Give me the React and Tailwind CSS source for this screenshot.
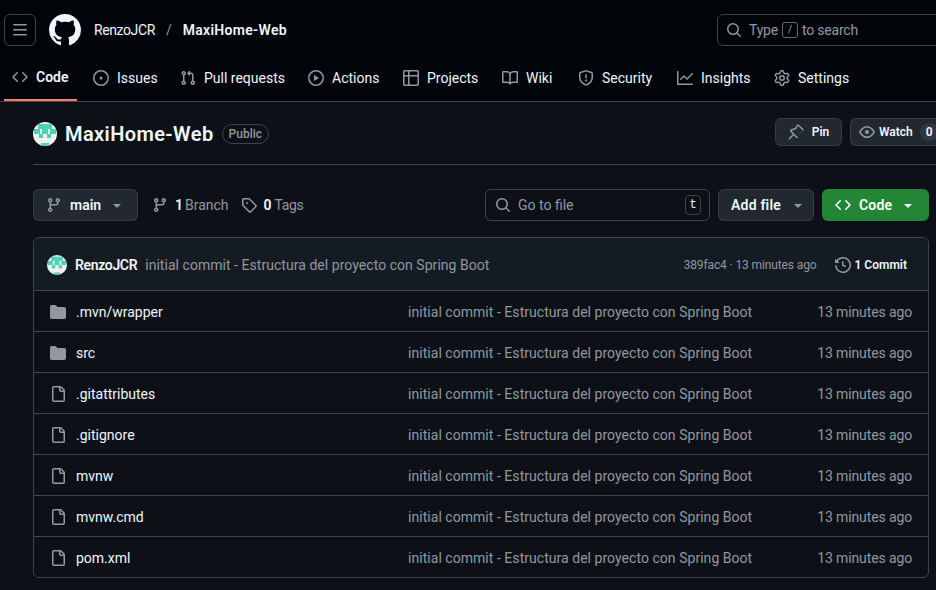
import React from 'react'

const P = {
  bars: 'M1 2.75A.75.75 0 0 1 1.75 2h12.5a.75.75 0 0 1 0 1.5H1.75A.75.75 0 0 1 1 2.75Zm0 5A.75.75 0 0 1 1.75 7h12.5a.75.75 0 0 1 0 1.5H1.75A.75.75 0 0 1 1 7.75ZM1.75 12h12.5a.75.75 0 0 1 0 1.5H1.75a.75.75 0 0 1 0-1.5Z',
  github: 'M8 0c4.42 0 8 3.58 8 8a8.013 8.013 0 0 1-5.45 7.59c-.4.08-.55-.17-.55-.38 0-.27.01-1.13.01-2.2 0-.75-.25-1.23-.54-1.48 1.78-.2 3.65-.88 3.65-3.95 0-.88-.31-1.59-.82-2.15.08-.2.36-1.02-.08-2.12 0 0-.67-.22-2.2.82-.64-.18-1.32-.27-2-.27-.68 0-1.36.09-2 .27-1.53-1.03-2.2-.82-2.2-.82-.44 1.1-.16 1.92-.08 2.12-.51.56-.82 1.28-.82 2.15 0 3.06 1.86 3.75 3.64 3.95-.23.2-.44.55-.51 1.07-.46.21-1.61.55-2.33-.66-.15-.24-.6-.83-1.23-.82-.67.01-.27.38.01.53.34.19.73.9.82 1.13.16.45.68 1.31 2.69.94 0 .67.01 1.3.01 1.49 0 .21-.15.45-.55.38A7.995 7.995 0 0 1 0 8c0-4.42 3.58-8 8-8Z',
  code: 'm11.28 3.22 4.25 4.25a.75.75 0 0 1 0 1.06l-4.25 4.25a.749.749 0 0 1-1.275-.326.749.749 0 0 1 .215-.734L13.94 8l-3.72-3.72a.749.749 0 0 1 .326-1.275.749.749 0 0 1 .734.215Zm-6.56 0a.751.751 0 0 1 1.042.018.751.751 0 0 1 .018 1.042L2.06 8l3.72 3.72a.749.749 0 0 1-.326 1.275.749.749 0 0 1-.734-.215L.47 8.53a.75.75 0 0 1 0-1.06Z',
  issue: 'M8 9.5a1.5 1.5 0 1 0 0-3 1.5 1.5 0 0 0 0 3ZM8 0a8 8 0 1 1 0 16A8 8 0 0 1 8 0ZM1.5 8a6.5 6.5 0 1 0 13 0 6.5 6.5 0 0 0-13 0Z',
  pr: 'M1.5 3.25a2.25 2.25 0 1 1 3 2.122v5.256a2.251 2.251 0 1 1-1.5 0V5.372A2.25 2.25 0 0 1 1.5 3.25Zm5.677-.177L9.573.677A.25.25 0 0 1 10 .854V2.5h1A2.5 2.5 0 0 1 13.5 5v5.628a2.251 2.251 0 1 1-1.5 0V5a1 1 0 0 0-1-1h-1v1.646a.25.25 0 0 1-.427.177L7.177 3.427a.25.25 0 0 1 0-.354ZM3.75 2.5a.75.75 0 1 0 0 1.5.75.75 0 0 0 0-1.5Zm0 9.5a.75.75 0 1 0 0 1.5.75.75 0 0 0 0-1.5Zm8.25.75a.75.75 0 1 0 1.5 0 .75.75 0 0 0-1.5 0Z',
  play: 'M8 0a8 8 0 1 1 0 16A8 8 0 0 1 8 0ZM1.5 8a6.5 6.5 0 1 0 13 0 6.5 6.5 0 0 0-13 0Zm4.879-2.773 4.264 2.559a.25.25 0 0 1 0 .428l-4.264 2.559A.25.25 0 0 1 6 10.559V5.442a.25.25 0 0 1 .379-.215Z',
  table: 'M0 1.75C0 .784.784 0 1.75 0h12.5C15.216 0 16 .784 16 1.75v12.5A1.75 1.75 0 0 1 14.25 16H1.75A1.75 1.75 0 0 1 0 14.25ZM6.5 6.5v8h7.75a.25.25 0 0 0 .25-.25V6.5Zm8-1.5V1.75a.25.25 0 0 0-.25-.25H6.5V5Zm-13 1.5v7.75c0 .138.112.25.25.25H5v-8ZM5 5V1.5H1.75a.25.25 0 0 0-.25.25V5Z',
  book: 'M0 1.75A.75.75 0 0 1 .75 1h4.253c1.227 0 2.317.59 3 1.501A3.743 3.743 0 0 1 11.006 1h4.245a.75.75 0 0 1 .75.75v10.5a.75.75 0 0 1-.75.75h-4.507a2.25 2.25 0 0 0-1.591.659l-.622.621a.75.75 0 0 1-1.06 0l-.622-.621A2.25 2.25 0 0 0 5.258 13H.75a.75.75 0 0 1-.75-.75Zm7.251 10.324.004-5.073-.002-2.253A2.25 2.25 0 0 0 5.003 2.5H1.5v9h3.757a3.75 3.75 0 0 1 1.994.574ZM8.755 4.75l-.004 7.322a3.752 3.752 0 0 1 1.992-.572H14.5v-9h-3.495a2.25 2.25 0 0 0-2.25 2.25Z',
  shield: 'M7.467.133a1.748 1.748 0 0 1 1.066 0l5.25 1.68A1.75 1.75 0 0 1 15 3.48V7c0 1.566-.32 3.182-1.303 4.682-.983 1.498-2.585 2.813-5.032 3.855a1.697 1.697 0 0 1-1.33 0c-2.447-1.042-4.049-2.357-5.032-3.855C1.32 10.182 1 8.566 1 7V3.48a1.75 1.75 0 0 1 1.217-1.667Zm.61 1.429a.25.25 0 0 0-.153 0l-5.25 1.68a.25.25 0 0 0-.174.238V7c0 1.358.275 2.666 1.057 3.86.784 1.194 2.121 2.34 4.366 3.297a.196.196 0 0 0 .154 0c2.245-.956 3.582-2.104 4.366-3.298C13.225 9.666 13.5 8.36 13.5 7V3.48a.251.251 0 0 0-.174-.237l-5.25-1.68ZM8.75 4.75v3a.75.75 0 0 1-1.5 0v-3a.75.75 0 0 1 1.5 0ZM9 10.5a1 1 0 1 1-2 0 1 1 0 0 1 2 0Z',
  graph: 'M1.5 1.75V13.5h13.75a.75.75 0 0 1 0 1.5H.75a.75.75 0 0 1-.75-.75V1.75a.75.75 0 0 1 1.5 0Zm14.28 2.53-5.25 5.25a.75.75 0 0 1-1.06 0L7 7.06 4.28 9.78a.751.751 0 0 1-1.042-.018.751.751 0 0 1-.018-1.042l3.25-3.25a.75.75 0 0 1 1.06 0L10 7.94l4.72-4.72a.751.751 0 0 1 1.042.018.751.751 0 0 1 .018 1.042Z',
  gear: 'M8 0a8.2 8.2 0 0 1 .701.031C9.444.095 9.99.645 10.16 1.29l.288 1.107c.018.066.079.158.212.224.231.114.454.243.668.386.123.082.233.09.299.071l1.103-.303c.644-.176 1.392.021 1.82.63.27.385.506.792.704 1.218.315.675.111 1.422-.364 1.891l-.814.806c-.049.048-.098.147-.088.294.016.257.016.515 0 .772-.01.147.038.246.088.294l.814.806c.475.469.679 1.216.364 1.891a7.977 7.977 0 0 1-.704 1.217c-.428.61-1.176.807-1.82.63l-1.102-.302c-.067-.019-.177-.011-.3.071a5.909 5.909 0 0 1-.668.386c-.133.066-.194.158-.211.224l-.29 1.106c-.168.646-.715 1.196-1.458 1.26a8.006 8.006 0 0 1-1.402 0c-.743-.064-1.289-.614-1.458-1.26l-.289-1.106c-.018-.066-.079-.158-.212-.224a5.738 5.738 0 0 1-.668-.386c-.123-.082-.233-.09-.299-.071l-1.103.303c-.644.176-1.392-.021-1.82-.63a8.12 8.12 0 0 1-.704-1.218c-.315-.675-.111-1.422.363-1.891l.815-.806c.05-.048.098-.147.088-.294a6.214 6.214 0 0 1 0-.772c.01-.147-.038-.246-.088-.294l-.815-.806C.635 6.045.431 5.298.746 4.623a7.92 7.92 0 0 1 .704-1.217c.428-.61 1.176-.807 1.82-.63l1.102.302c.067.019.177.011.3-.071.214-.143.437-.272.668-.386.133-.066.194-.158.211-.224l.29-1.106C6.009.645 6.556.095 7.299.03 7.53.01 7.764 0 8 0Zm-.571 1.525c-.036.003-.108.036-.137.146l-.289 1.105c-.147.561-.549.967-.998 1.189-.173.086-.34.183-.5.29-.417.278-.97.423-1.529.27l-1.103-.303c-.109-.03-.175.016-.195.045-.22.312-.412.644-.573.99-.014.031-.021.11.059.19l.815.806c.411.406.562.957.53 1.456a4.709 4.709 0 0 0 0 .582c.032.499-.119 1.05-.53 1.456l-.815.806c-.081.08-.073.159-.059.19.162.346.353.677.573.989.02.03.085.076.195.046l1.102-.303c.56-.153 1.113-.008 1.53.27.161.107.328.204.501.29.447.222.85.629.997 1.189l.289 1.105c.029.109.101.143.137.146a6.6 6.6 0 0 0 1.142 0c.036-.003.108-.036.137-.146l.289-1.105c.147-.561.549-.967.998-1.189.173-.086.34-.183.5-.29.417-.278.97-.423 1.529-.27l1.103.303c.109.029.175-.016.195-.045.22-.313.411-.644.573-.99.014-.031.021-.11-.059-.19l-.815-.806c-.411-.406-.562-.957-.53-1.456a4.709 4.709 0 0 0 0-.582c-.032-.499.119-1.05.53-1.456l.815-.806c.081-.08.073-.159.059-.19a6.464 6.464 0 0 0-.573-.989c-.02-.03-.085-.076-.195-.046l-1.102.303c-.56.153-1.113.008-1.53-.27a4.44 4.44 0 0 0-.501-.29c-.447-.222-.85-.629-.997-1.189l-.289-1.105c-.029-.11-.101-.143-.137-.146a6.6 6.6 0 0 0-1.142 0ZM11 8a3 3 0 1 1-6 0 3 3 0 0 1 6 0ZM9.5 8a1.5 1.5 0 1 0-3.001.001A1.5 1.5 0 0 0 9.5 8Z',
  search: 'M10.68 11.74a6 6 0 0 1-7.922-8.982 6 6 0 0 1 8.982 7.922l3.04 3.04a.749.749 0 0 1-.326 1.275.749.749 0 0 1-.734-.215ZM11.5 7a4.499 4.499 0 1 0-8.997 0A4.499 4.499 0 0 0 11.5 7Z',
  pin: 'm11.294.984 3.722 3.722a1.75 1.75 0 0 1-.504 2.826l-1.327.613a3.089 3.089 0 0 0-1.707 2.084l-.584 2.454c-.317 1.332-1.972 1.8-2.94.832L5.75 11.311 1.78 15.28a.749.749 0 0 1-1.275-.326.749.749 0 0 1 .215-.734L4.69 10.25 2.487 8.047c-.968-.968-.5-2.623.832-2.94l2.454-.584a3.089 3.089 0 0 0 2.084-1.707l.613-1.327a1.75 1.75 0 0 1 2.824-.505Zm-1.06 1.06a.25.25 0 0 0-.404.072l-.613 1.327a4.584 4.584 0 0 1-3.09 2.534l-2.454.584a.25.25 0 0 0-.119.42l6.7 6.7a.25.25 0 0 0 .42-.119l.584-2.454a4.584 4.584 0 0 1 2.534-3.09l1.327-.613a.25.25 0 0 0 .072-.404l-3.722-3.722Z',
  eye: 'M8 2c1.981 0 3.671.992 4.933 2.078 1.27 1.091 2.187 2.345 2.637 3.023a1.62 1.62 0 0 1 0 1.798c-.45.678-1.367 1.932-2.637 3.023C11.67 13.008 9.981 14 8 14c-1.981 0-3.671-.992-4.933-2.078C1.797 10.83.88 9.576.43 8.898a1.62 1.62 0 0 1 0-1.798c.45-.677 1.367-1.931 2.637-3.022C4.33 2.992 6.019 2 8 2ZM1.679 7.932a.12.12 0 0 0 0 .136c.411.622 1.241 1.75 2.366 2.717C5.176 11.758 6.527 12.5 8 12.5c1.473 0 2.825-.742 3.955-1.715 1.124-.967 1.954-2.096 2.366-2.717a.12.12 0 0 0 0-.136c-.412-.621-1.242-1.75-2.366-2.717C10.824 4.242 9.473 3.5 8 3.5c-1.473 0-2.825.742-3.955 1.715-1.124.967-1.954 2.096-2.366 2.717ZM8 10a2 2 0 1 1-.001-3.999A2 2 0 0 1 8 10Z',
  branch: 'M9.5 3.25a2.25 2.25 0 1 1 3 2.122V6A2.5 2.5 0 0 1 10 8.5H6a1 1 0 0 0-1 1v1.128a2.251 2.251 0 1 1-1.5 0V5.372a2.25 2.25 0 1 1 1.5 0v1.836A2.493 2.493 0 0 1 6 7h4a1 1 0 0 0 1-1v-.628A2.25 2.25 0 0 1 9.5 3.25Zm-6 0a.75.75 0 1 0 1.5 0 .75.75 0 0 0-1.5 0Zm8.25-.75a.75.75 0 1 0 0 1.5.75.75 0 0 0 0-1.5ZM4.25 12a.75.75 0 1 0 0 1.5.75.75 0 0 0 0-1.5Z',
  tag: 'M1 7.775V2.75C1 1.784 1.784 1 2.75 1h5.025c.464 0 .91.184 1.238.513l6.25 6.25a1.75 1.75 0 0 1 0 2.474l-5.026 5.026a1.75 1.75 0 0 1-2.474 0l-6.25-6.25A1.752 1.752 0 0 1 1 7.775Zm1.5 0c0 .066.026.13.073.177l6.25 6.25a.25.25 0 0 0 .354 0l5.025-5.025a.25.25 0 0 0 0-.354l-6.25-6.25a.25.25 0 0 0-.177-.073H2.75a.25.25 0 0 0-.25.25ZM6 5a1 1 0 1 1 0 2 1 1 0 0 1 0-2Z',
  history: 'm.427 1.927 1.215 1.215a8.002 8.002 0 1 1-1.6 5.685.75.75 0 1 1 1.493-.154 6.5 6.5 0 1 0 1.18-4.458l1.358 1.358A.25.25 0 0 1 3.896 6H.25A.25.25 0 0 1 0 5.75V2.104a.25.25 0 0 1 .427-.177ZM7.75 4a.75.75 0 0 1 .75.75v2.992l2.028.812a.75.75 0 0 1-.557 1.392l-2.5-1A.751.751 0 0 1 7 8.25v-3.5A.75.75 0 0 1 7.75 4Z',
  folder: 'M1.75 1A1.75 1.75 0 0 0 0 2.75v10.5C0 14.216.784 15 1.75 15h12.5A1.75 1.75 0 0 0 16 13.25v-8.5A1.75 1.75 0 0 0 14.25 3H7.5a.25.25 0 0 1-.2-.1l-.9-1.2C6.07 1.26 5.55 1 5 1H1.75Z',
  file: 'M2 1.75C2 .784 2.784 0 3.75 0h6.586c.464 0 .909.184 1.237.513l2.914 2.914c.329.328.513.773.513 1.237v9.586A1.75 1.75 0 0 1 13.25 16h-9.5A1.75 1.75 0 0 1 2 14.25Zm1.75-.25a.25.25 0 0 0-.25.25v12.5c0 .138.112.25.25.25h9.5a.25.25 0 0 0 .25-.25V6h-2.75A1.75 1.75 0 0 1 9 4.25V1.5Zm6.75.062V4.25c0 .138.112.25.25.25h2.688l-.011-.013-2.914-2.914-.013-.011Z',
}

function Icon({ d, size = 16, className = 'text-[#9198a1]' }) {
  return (
    <svg viewBox="0 0 16 16" width={size} height={size} fill="currentColor" className={'shrink-0 ' + className}>
      <path d={d} />
    </svg>
  )
}

function Caret({ className = 'text-[#9198a1]' }) {
  return (
    <svg viewBox="0 0 16 16" width="16" height="16" fill="currentColor" className={'shrink-0 ' + className}>
      <path d="m4.427 7.427 3.396 3.396a.25.25 0 0 0 .354 0l3.396-3.396A.25.25 0 0 0 11.396 7H4.604a.25.25 0 0 0-.177.427Z" />
    </svg>
  )
}

// identicon of the repo owner
function Avatar({ size }) {
  return (
    <svg viewBox="0 0 24 24" width={size} height={size} className="shrink-0 rounded-full">
      <rect width="24" height="24" fill="#f0f2f0" />
      <g fill="#4fd1b5">
        <rect x="5" y="2" width="14" height="5" />
        <rect x="1" y="7" width="6" height="5" />
        <rect x="9" y="7" width="6" height="5" />
        <rect x="17" y="7" width="6" height="5" />
        <rect x="6" y="12" width="4" height="4" />
        <rect x="14" y="12" width="4" height="4" />
        <rect x="8" y="21" width="8" height="3" />
      </g>
    </svg>
  )
}

const tabs = [
  ['Code', P.code, 'w-[73px]'],
  ['Issues', P.issue, 'w-[79px]'],
  ['Pull requests', P.pr, 'w-[120px]'],
  ['Actions', P.play, 'w-[87px]'],
  ['Projects', P.table, 'w-[91px]'],
  ['Wiki', P.book, 'w-[68px]'],
  ['Security', P.shield, 'w-[91px]'],
  ['Insights', P.graph, 'w-[89px]'],
  ['Settings', P.gear, 'w-[100px]'],
]

const files = [
  ['.mvn/wrapper', P.folder],
  ['src', P.folder],
  ['.gitattributes', P.file],
  ['.gitignore', P.file],
  ['mvnw', P.file],
  ['mvnw.cmd', P.file],
  ['pom.xml', P.file],
]

export default function App() {
  return (
    <div className="w-[936px] h-[590px] overflow-hidden bg-[#0d1117] text-[14px] text-[#f0f6fc] font-['Roboto',sans-serif]">
      <header className="h-[102px] bg-[#010409] border-b border-[#3d444d]">
        <div className="h-[60px] flex items-center pl-[4px]">
          <div className="w-[32px] h-[32px] flex items-center justify-center rounded-md border border-[#3d444d]">
            <Icon d={P.bars} />
          </div>
          <Icon d={P.github} size={32} className="text-[#f0f6fc] ml-[13px]" />
          <span className="ml-[13px] tracking-[-0.4px]">RenzoJCR</span>
          <span className="ml-[11px] text-[#9198a1]">/</span>
          <span className="ml-[11px] font-semibold tracking-[0.3px]">MaxiHome-Web</span>
          <div className="ml-auto -mr-[40px] w-[259px] h-[32px] flex items-center pl-[8px] rounded-md border border-[#3d444d] text-[#9198a1] tracking-[-0.2px]">
            <Icon d={P.search} />
            <span className="ml-[7px]">Type</span>
            <span className="mx-[4px] w-[16px] h-[16px] flex items-center justify-center rounded-[3px] border border-[#656c76] text-[11px]">/</span>
            <span>to search</span>
          </div>
        </div>
        <nav className="h-[41px] flex items-start pl-[4px]">
          {tabs.map(([label, d, w], i) => (
            <div key={label} className={'h-[41px] flex items-center gap-[8px] px-[8px] pb-[5px] mr-[8px] shrink-0 ' + w + (i === 0 ? ' border-b-2 border-[#f78166] font-semibold' : '')}>
              <Icon d={d} />
              <span className="whitespace-nowrap">{label}</span>
            </div>
          ))}
        </nav>
      </header>

      <div className="pl-[33px]">
        <div className="h-[63px] flex items-center border-b border-[#3d444d] pt-[2px]">
          <Avatar size={24} />
          <span className="ml-[8px] text-[20px] font-semibold tracking-[0.4px]">MaxiHome-Web</span>
          <span className="ml-[8px] h-[20px] px-[6px] flex items-center rounded-full border border-[#3d444d] text-[12px] font-medium text-[#9198a1]">Public</span>
          <div className="ml-auto -mr-[60px] mb-[5px] flex items-center gap-[8px]">
            <div className="w-[67px] h-[28px] flex items-center justify-center gap-[8px] rounded-md border border-[#3d444db3] bg-[#212830] text-[12px] font-semibold">
              <Icon d={P.pin} />
              <span>Pin</span>
            </div>
            <div className="w-[146px] h-[28px] flex items-center gap-[4px] pl-[8px] rounded-md border border-[#3d444db3] bg-[#212830] text-[12px] font-semibold">
              <Icon d={P.eye} />
              <span>Watch</span>
              <span className="ml-[3px] px-[6px] h-[18px] flex items-center rounded-full bg-[#2f3742]">0</span>
            </div>
          </div>
        </div>
      </div>

      <main className="pl-[33px] pr-[7px]">
        <div className="mt-[24px] h-[32px] flex items-center">
          <div className="w-[105px] h-[32px] flex items-center pl-[12px] rounded-md border border-[#3d444db3] bg-[#212830]">
            <Icon d={P.branch} />
            <span className="ml-[8px] font-semibold">main</span>
            <Caret className="text-[#9198a1] ml-[8px]" />
          </div>
          <Icon d={P.branch} className="text-[#9198a1] ml-[14px]" />
          <span className="ml-[7px] font-semibold">1</span>
          <span className="ml-[2px] text-[#9198a1]">Branch</span>
          <Icon d={P.tag} className="text-[#9198a1] ml-[12px]" />
          <span className="ml-[7px] font-semibold">0</span>
          <span className="ml-[3px] text-[#9198a1] tracking-[-0.4px]">Tags</span>
          <div className="ml-auto w-[225px] h-[32px] flex items-center pl-[9px] pr-[8px] rounded-md border border-[#3d444d] text-[#9198a1]">
            <Icon d={P.search} />
            <span className="ml-[7px]">Go to file</span>
            <span className="ml-auto w-[16px] h-[20px] flex items-center justify-center rounded-[4px] border border-[#3d444d] text-[12px] text-[#f0f6fc] font-['Liberation_Mono',monospace]">t</span>
          </div>
          <div className="ml-[8px] w-[96px] h-[32px] flex items-center pl-[12px] rounded-md border border-[#3d444db3] bg-[#212830]">
            <span className="font-semibold tracking-[0.2px]">Add file</span>
            <Caret className="text-[#9198a1] ml-[9px]" />
          </div>
          <div className="ml-[8px] w-[107px] h-[32px] flex items-center pl-[13px] rounded-md bg-[#238636] text-white">
            <Icon d={P.code} className="text-white" />
            <span className="ml-[8px] font-semibold tracking-[0.2px]">Code</span>
            <Caret className="text-white ml-[8px]" />
          </div>
        </div>

        <div className="mt-[16px] rounded-md border border-[#3d444d] overflow-hidden">
          <div className="h-[52px] flex items-center pl-[13px] pr-[21px] pt-[2px] bg-[#151b23]">
            <Avatar size={20} />
            <span className="ml-[8px] font-semibold tracking-[-0.35px]">RenzoJCR</span>
            <span className="ml-[8px] text-[#9198a1] tracking-[0.04px]">initial commit - Estructura del proyecto con Spring Boot</span>
            <span className="ml-auto text-[12px] text-[#9198a1] tracking-[-0.12px]">389fac4 · 13 minutes ago</span>
            <Icon d={P.history} className="text-[#9198a1] ml-[18px]" />
            <span className="ml-[4px] text-[12px] font-semibold">1 Commit</span>
          </div>
          {files.map(([name, d]) => (
            <div key={name} className="h-[41px] flex items-center px-[16px] pt-[2px] border-t border-[#3d444d]">
              <Icon d={d} className="text-[#9198a1]" />
              <span className="ml-[10px] w-[332px]">{name}</span>
              <span className="text-[#9198a1] tracking-[0.04px]">initial commit - Estructura del proyecto con Spring Boot</span>
              <span className="ml-auto text-[#9198a1] tracking-[-0.12px]">13 minutes ago</span>
            </div>
          ))}
        </div>
      </main>
    </div>
  )
}
